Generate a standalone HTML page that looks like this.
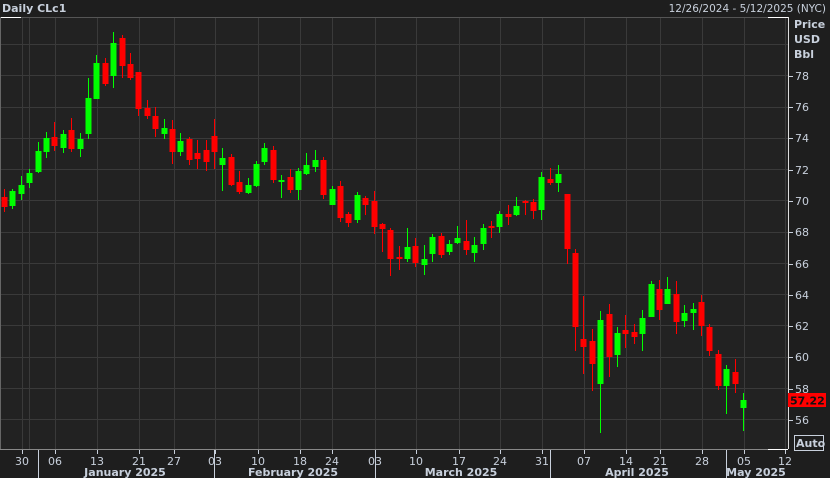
<!DOCTYPE html>
<html><head><meta charset="utf-8"><style>
html,body{margin:0;padding:0;background:#1e1e1e;width:830px;height:478px;overflow:hidden;font-family:"DejaVu Sans","Liberation Sans",sans-serif;}
</style></head><body>
<svg id="s" width="830" height="478" xmlns="http://www.w3.org/2000/svg" style="position:absolute;left:0;top:0">
<rect x="0" y="0" width="830" height="478" fill="#1e1e1e"/>
<rect x="0" y="17" width="788" height="432" fill="#222222"/>
<g id="grid" stroke="#3a3a3a" stroke-width="1"></g>
<line x1="0" y1="17.5" x2="788" y2="17.5" stroke="#555"/>
<line x1="0" y1="17.5" x2="21" y2="17.5" stroke="#fff"/>
<line x1="768" y1="17.5" x2="788" y2="17.5" stroke="#fff"/>
<line x1="0.5" y1="17" x2="0.5" y2="449" stroke="#666"/>
<line x1="788.5" y1="17" x2="788.5" y2="449" stroke="#ddd"/>
<line x1="0" y1="449.5" x2="788" y2="449.5" stroke="#888"/>
<line x1="768" y1="449.5" x2="788" y2="449.5" stroke="#fff"/>
<g id="c"></g>
<g font-size="11" fill="#c8d0dc">
<text x="2" y="12" font-weight="bold">Daily CLc1</text>
<text x="826" y="12" text-anchor="end" font-size="10.5">12/26/2024 - 5/12/2025 (NYC)</text>
<text x="794" y="28" font-weight="bold">Price</text>
<text x="794" y="43" font-weight="bold">USD</text>
<text x="794" y="58" font-weight="bold">Bbl</text>
</g>
<g id="ax" font-size="11" fill="#c8d0dc"></g>
<rect x="788" y="393" width="38" height="14" fill="#ff0000"/>
<text x="790" y="404.5" font-size="11" font-weight="bold" fill="#111">57.22</text>
<rect x="794.5" y="435.5" width="29" height="15" fill="none" stroke="#c8d0dc"/>
<text x="796" y="447" font-size="11" font-weight="bold" fill="#c8d0dc">Auto</text>
</svg>
<script>
var NS="http://www.w3.org/2000/svg";
function el(p,t,a,txt){var e=document.createElementNS(NS,t);for(var k in a)e.setAttribute(k,a[k]);if(txt)e.textContent=txt;p.appendChild(e);return e;}
var g=document.getElementById('grid'),ax=document.getElementById('ax'),c=document.getElementById('c');
for(var i=0;i<13;i++){var y=44+i*31.27;el(g,'line',{x1:0,x2:788,y1:Math.round(y)+.5,y2:Math.round(y)+.5});}
var tk=[[22,'30'],[55,'06'],[97,'13'],[139,'21'],[174,'27'],[215,'03'],[258,'10'],[300,'18'],[332,'24'],[375,'03'],[416,'10'],[459,'17'],[500,'24'],[542,'31'],[584,'07'],[626,'14'],[660,'21'],[702,'28'],[744,'05'],[785,'12']];
tk.forEach(function(t){if(t[0]<786)el(g,'line',{x1:t[0]+.5,x2:t[0]+.5,y1:17,y2:449});el(ax,'line',{x1:t[0]+.5,x2:t[0]+.5,y1:450,y2:454,stroke:'#c8d0dc'});el(ax,'text',{x:t[0],y:465,'text-anchor':'middle'},t[1]);});
el(g,'line',{x1:29.5,x2:29.5,y1:17,y2:449});
[38,214,375,550,726].forEach(function(x){el(ax,'line',{x1:x+.5,x2:x+.5,y1:450,y2:478,stroke:'#c8d0dc'});});
[[125,'January 2025'],[293,'February 2025'],[461,'March 2025'],[637,'April 2025'],[756,'May 2025']].forEach(function(m){el(ax,'text',{x:m[0],y:476,'text-anchor':'middle','font-weight':'bold'},m[1]);});
for(var p=56;p<=78;p+=2){var y=420-(p-56)*15.64;el(ax,'line',{x1:789,x2:793,y1:Math.round(y)+.5,y2:Math.round(y)+.5,stroke:'#c8d0dc'});if(p!=56||true)el(ax,'text',{x:795,y:Math.round(y)+4},''+p);}
var d=[[4,0,197,207,189,212],[12,1,191,206,189,209],[21,1,185,194,176,200],[29,1,173,183,169,188],[38,1,151,172,142,173],[46,1,138,152,132,158],[54,0,137,146,122,151],[63,1,134,148,130,153],[71,0,130,149,118,152],[80,1,139,149,133,157],[88,1,98,134,78,139],[96,1,63,99,55,99],[105,0,63,84,58,86],[113,1,43,76,32,88],[122,0,38,66,35,78],[130,0,64,78,53,80],[138,0,72,109,72,116],[147,0,108,116,100,119],[155,0,116,129,107,137],[164,1,128,134,119,139],[172,0,129,152,120,164],[180,1,141,152,133,156],[189,0,139,160,137,165],[197,0,153,159,140,169],[206,0,150,162,140,171],[214,0,136,152,119,169],[222,1,158,165,148,191],[231,0,157,185,154,186],[239,0,182,192,171,194],[248,1,185,193,178,194],[256,1,164,186,161,187],[264,1,148,162,143,165],[273,0,150,180,146,183],[281,1,180,182,175,198],[290,0,177,190,169,193],[298,1,171,190,168,200],[306,1,165,174,153,175],[315,1,160,167,150,172],[323,0,160,195,157,199],[332,1,189,205,186,205],[340,0,186,218,181,222],[348,0,214,223,212,227],[357,1,195,220,192,223],[365,0,198,205,196,215],[374,0,201,227,191,234],[382,0,224,229,223,252],[390,0,230,259,228,276],[399,0,257,258,246,270],[407,1,247,259,228,262],[415,0,246,263,238,267],[424,1,259,265,245,275],[432,1,237,254,234,262],[441,0,236,255,233,258],[449,1,244,252,240,255],[457,1,238,243,226,244],[466,0,241,250,220,255],[474,1,245,253,237,262],[483,1,228,244,224,250],[491,0,226,228,221,238],[499,1,214,227,211,233],[508,0,214,217,205,225],[516,1,206,215,197,216],[525,0,201,203,200,215],[533,0,202,211,199,219],[541,1,177,210,172,220],[550,0,179,183,168,185],[558,1,174,183,165,192],[567,0,194,249,194,264],[575,0,253,327,249,351],[583,0,339,347,296,374],[592,0,341,364,329,391],[600,1,320,384,311,433],[609,0,314,357,304,377],[617,1,333,355,327,367],[625,0,330,334,315,348],[634,0,332,337,324,344],[642,1,318,334,310,351],[651,1,284,317,281,317],[659,0,289,310,280,320],[667,1,289,304,277,304],[676,0,294,322,281,334],[684,1,313,321,305,327],[693,1,309,313,303,330],[701,0,302,326,295,336],[709,0,327,351,324,356],[718,0,354,386,350,390],[726,1,369,386,365,414],[735,0,372,384,359,393],[743,1,400,408,393,431]];
d.forEach(function(k){var col=k[1]?'#00ff00':'#ff0000';el(c,'rect',{x:k[0],y:k[4],width:1,height:k[5]-k[4],fill:col});var h=Math.max(2,k[3]-k[2]);el(c,'rect',{x:k[0]-2.5,y:k[2],width:6,height:h,fill:col});});
</script>
</body></html>
